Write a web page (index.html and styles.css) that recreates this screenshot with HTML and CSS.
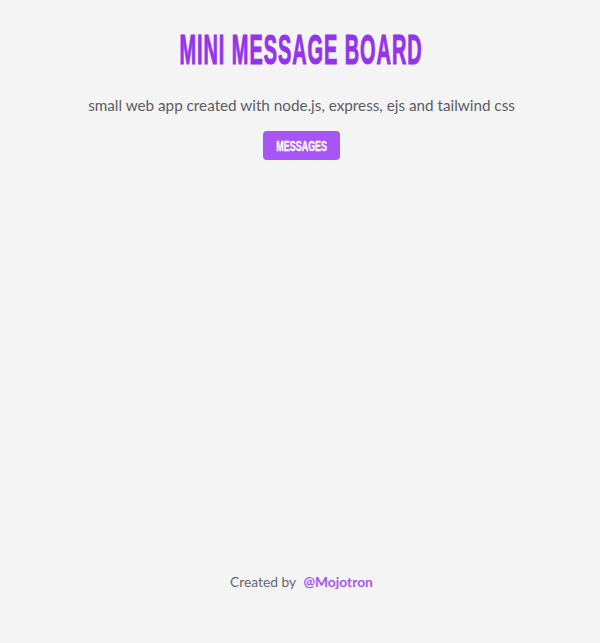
FILE: index.html
```html
<!DOCTYPE html>
<html lang="en">
<head>
<meta charset="utf-8">
<title>Mini Message Board</title>
<link rel="stylesheet" href="styles.css">
</head>
<body>
<div class="page">
  <header class="header">
    <h1 class="title"><span>MINI MESSAGE BOARD</span></h1>
    <p class="subtitle">small web app created with node.js, express, ejs and tailwind css</p>
    <a class="btn" href="#"><span>MESSAGES</span></a>
  </header>
  <main class="main"></main>
  <footer class="footer">
    <span class="created">Created by</span>
    <a class="author" href="#">@Mojotron</a>
  </footer>
</div>
</body>
</html>
```

FILE: styles.css
```css
* { box-sizing: border-box; }
html, body { margin: 0; padding: 0; }
body {
  background: #f4f4f4;
  font-family: "Lato", "Open Sans", sans-serif;
  color: #555;
}
.page {
  min-height: 643px;
  padding-left: 3px;
  display: flex;
  flex-direction: column;
  align-items: center;
}
.header {
  display: flex;
  flex-direction: column;
  align-items: center;
  padding-top: 27px;
}
.title {
  margin: 0;
  font-family: "Liberation Sans", sans-serif;
  font-weight: 700;
  font-size: 42px;
  line-height: 46px;
  color: #9333ea;
  letter-spacing: 2px;
  -webkit-text-stroke: 1.1px #9333ea;
}
.title span {
  display: inline-block;
  transform: scaleX(0.475);
}
.subtitle {
  margin: 21px 0 0;
  font-size: 15.25px;
  line-height: 22px;
  color: #5b5b66;
}
.btn {
  margin-top: 15px;
  width: 77px;
  height: 29px;
  display: flex;
  align-items: center;
  justify-content: center;
  background: #a855f7;
  color: #fff;
  border-radius: 4px;
  text-decoration: none;
  font-family: "Liberation Sans", sans-serif;
  font-weight: 700;
  font-size: 14px;
  -webkit-text-stroke: 0.4px #fff;
}
.btn span {
  display: inline-block;
  transform: scaleX(0.64);
}
.main { flex: 1; }
.footer {
  padding-bottom: 51px;
  font-size: 13.8px;
  line-height: 20px;
}
.created { color: #666670; }
.author {
  margin-left: 4px;
  color: #a855f7;
  font-weight: 700;
  text-decoration: none;
}
```
